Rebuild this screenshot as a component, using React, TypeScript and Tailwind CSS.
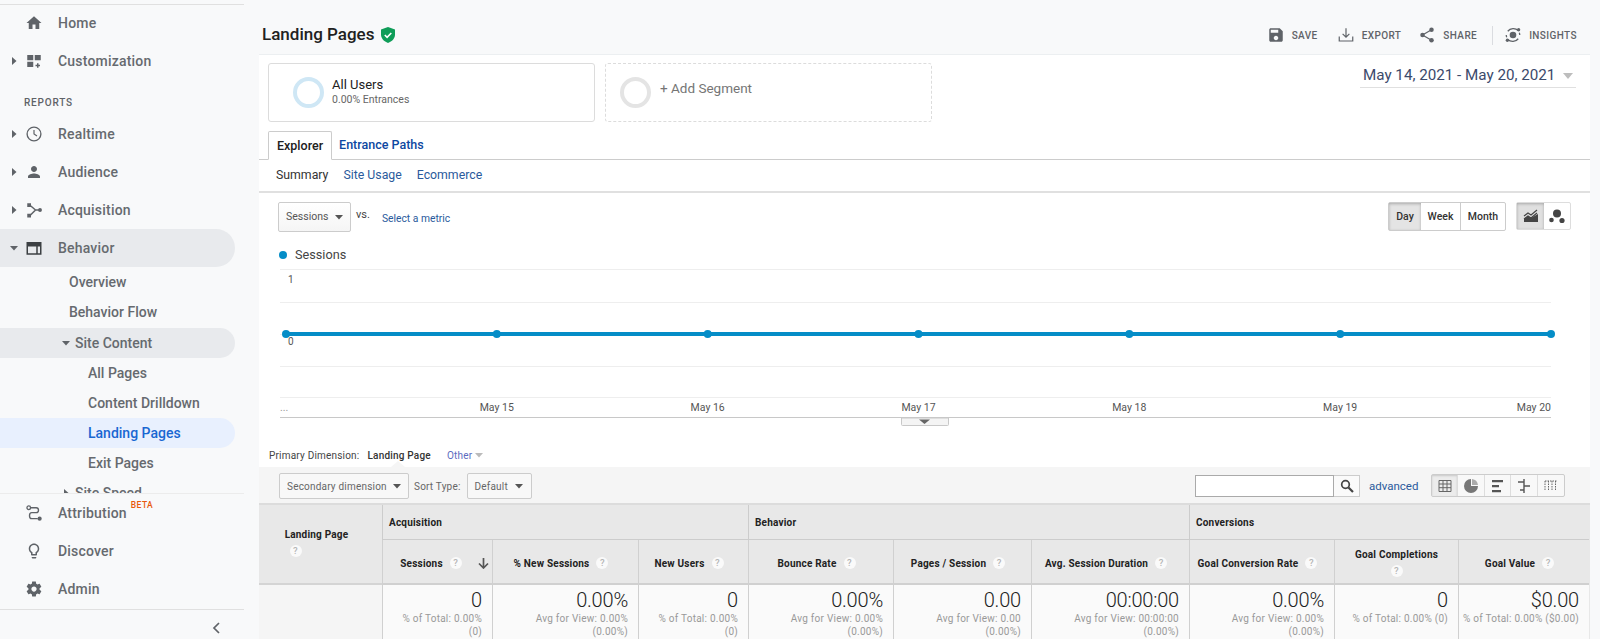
import type { ReactNode } from "react";

const G = "#5f6368";

function Caret({ open }: { open?: boolean }) {
  return (
    <svg width="8" height="8" viewBox="0 0 8 8" className="shrink-0">
      {open ? <path d="M0 2h8L4 6.5z" fill={G} /> : <path d="M2 0v8l4.5-4z" fill={G} />}
    </svg>
  );
}

const navIcons: Record<string, ReactNode> = {
  Home: <path d="M10 20v-6h4v6h5v-8h3L12 3 2 12h3v8z" fill={G} />,
  Customization: (
    <path d="M3 4h8v7H3zM13 4h8v7h-8zM3 13h8v7H3zM16 15h2v2h2v2h-2v2h-2v-2h-2v-2h2z" fill={G} />
  ),
  Realtime: (
    <>
      <circle cx="12" cy="12" r="9.2" fill="none" stroke={G} strokeWidth="1.8" />
      <path d="M12 6.5V12l4 2.6" fill="none" stroke={G} strokeWidth="1.6" />
    </>
  ),
  Audience: (
    <path
      d="M12 12c2.21 0 4-1.79 4-4s-1.79-4-4-4-4 1.79-4 4 1.79 4 4 4zm0 2c-2.67 0-8 1.34-8 4v2h16v-2c0-2.66-5.33-4-8-4z"
      fill={G}
    />
  ),
  Acquisition: (
    <>
      <path d="M3 3h5v5H3zM3 17h5v5H3z" fill={G} />
      <circle cx="20" cy="12" r="2.6" fill={G} />
      <path d="M7 6l7 6-7 7M13 12h6" fill="none" stroke={G} strokeWidth="2" />
    </>
  ),
  Behavior: <path d="M2 4h20v17H2zM4 10v9h11v-9zm13 0v9h3v-9z" fill="#3c4043" fillRule="evenodd" />,
  Attribution: (
    <>
      <circle cx="5" cy="5" r="2.4" fill="none" stroke={G} strokeWidth="1.7" />
      <circle cx="19.5" cy="19.5" r="2.8" fill={G} />
      <path d="M8 5h7c4 0 4 6.5 0 6.5H9c-4 0-4 8 0 8h8" fill="none" stroke={G} strokeWidth="1.8" />
    </>
  ),
  Discover: (
    <path
      d="M9 21c0 .55.45 1 1 1h4c.55 0 1-.45 1-1v-1H9v1zm3-19C8.14 2 5 5.14 5 9c0 2.38 1.19 4.47 3 5.74V17c0 .55.45 1 1 1h6c.55 0 1-.45 1-1v-2.26c1.81-1.27 3-3.36 3-5.74 0-3.86-3.14-7-7-7zm2.85 11.1l-.85.6V16h-4v-2.3l-.85-.6C7.8 12.16 7 10.63 7 9c0-2.76 2.24-5 5-5s5 2.24 5 5c0 1.63-.8 3.16-2.15 4.1z"
      fill={G}
    />
  ),
  Admin: (
    <path
      d="M19.43 12.98c.04-.32.07-.64.07-.98s-.03-.66-.07-.98l2.11-1.65c.19-.15.24-.42.12-.64l-2-3.46c-.12-.22-.39-.3-.61-.22l-2.49 1c-.52-.4-1.08-.73-1.69-.98l-.38-2.65C14.46 2.18 14.25 2 14 2h-4c-.25 0-.46.18-.49.42l-.38 2.65c-.61.25-1.17.59-1.69.98l-2.49-1c-.23-.09-.49 0-.61.22l-2 3.46c-.13.22-.07.49.12.64l2.11 1.65c-.04.32-.07.65-.07.98s.03.66.07.98l-2.11 1.65c-.19.15-.24.42-.12.64l2 3.46c.12.22.39.3.61.22l2.49-1c.52.4 1.08.73 1.69.98l.38 2.65c.03.24.24.42.49.42h4c.25 0 .46-.18.49-.42l.38-2.65c.61-.25 1.17-.59 1.69-.98l2.49 1c.23.09.49 0 .61-.22l2-3.46c.12-.22.07-.49-.12-.64l-2.11-1.65zM12 15.5c-1.93 0-3.5-1.57-3.5-3.5s1.57-3.5 3.5-3.5 3.5 1.57 3.5 3.5-1.57 3.5-3.5 3.5z"
      fill={G}
    />
  ),
};

function NavRow({ label, caret, open, active, beta }: { label: string; caret?: boolean; open?: boolean; active?: boolean; beta?: boolean }) {
  return (
    <div className={`flex h-[38px] w-[235px] items-center rounded-r-[19px] ${active ? "bg-[#e8eaed]" : ""}`}>
      <div className="flex w-[24px] justify-end pr-[6px]">{caret && <Caret open={open} />}</div>
      <svg width="18" height="18" viewBox="0 0 24 24" className="ml-[1px] shrink-0">
        {navIcons[label]}
      </svg>
      <span className="ml-[15px] text-[14px] font-medium tracking-[0.2px] text-[#666a6f]">{label}</span>
      {beta && <sup className="ml-[4px] -mt-[7px] text-[8.5px] font-medium tracking-[0.4px] text-[#e8590c]">BETA</sup>}
    </div>
  );
}

function SubRow({ label, pl, active, pill }: { label: string; pl: string; active?: boolean; pill?: boolean }) {
  return (
    <div
      className={`flex h-[30px] w-[235px] shrink-0 items-center rounded-r-[15px] text-[14px] font-medium ${pl} ${
        active ? "bg-[#e8f0fe] text-[#1967d2]" : pill ? "bg-[#e8eaed] text-[#666a6f]" : "text-[#666a6f]"
      }`}
    >
      {pill && (
        <span className="mr-[5px]">
          <Caret open />
        </span>
      )}
      {label}
    </div>
  );
}

function Sidebar() {
  return (
    <aside className="flex h-full w-[244px] shrink-0 flex-col border-t border-[#e0e0e0] bg-[#f8f9fa]">
      <div className="-mt-[1px] min-h-0 flex-1 overflow-hidden">
        <NavRow label="Home" />
        <NavRow label="Customization" caret />
        <div className="flex h-[35px] items-center pl-[24px] pt-[9px] text-[10px] font-medium tracking-[0.8px] text-[#5f6368]">REPORTS</div>
        <NavRow label="Realtime" caret />
        <NavRow label="Audience" caret />
        <NavRow label="Acquisition" caret />
        <NavRow label="Behavior" caret open active />
        <SubRow label="Overview" pl="pl-[69px]" />
        <SubRow label="Behavior Flow" pl="pl-[69px]" />
        <div className="h-[1px]" />
        <SubRow label="Site Content" pl="pl-[62px]" pill />
        <SubRow label="All Pages" pl="pl-[88px]" />
        <SubRow label="Content Drilldown" pl="pl-[88px]" />
        <SubRow label="Landing Pages" pl="pl-[88px]" active />
        <SubRow label="Exit Pages" pl="pl-[88px]" />
        <div className="flex h-[30px] items-center pl-[62px] text-[14px] font-medium text-[#666a6f]">
          <span className="mr-[5px]">
            <Caret />
          </span>
          Site Speed
        </div>
      </div>
      <div className="border-t border-[#ececec] bg-[#f8f9fa]">
        <NavRow label="Attribution" beta />
        <NavRow label="Discover" />
        <NavRow label="Admin" />
        <div className="mt-[1px] flex h-[30px] items-center justify-end border-t border-[#e0e0e0] pr-[22px] pt-[7px]">
          <svg width="12" height="14" viewBox="0 0 12 14">
            <path d="M9 2L4 7l5 5" fill="none" stroke={G} strokeWidth="1.7" />
          </svg>
        </div>
      </div>
    </aside>
  );
}

function HeaderAction({ label, icon }: { label: string; icon: ReactNode }) {
  return (
    <div className="flex items-center gap-[7px]">
      <svg width="18" height="18" viewBox="0 0 24 24">
        {icon}
      </svg>
      <span className="text-[10px] font-medium tracking-[0.4px] text-[#5f6368]">{label}</span>
    </div>
  );
}

function Header() {
  return (
    <div className="flex h-[50px] items-center justify-between pl-[3px] pr-[13px] pt-[12px]">
      <div className="flex items-center gap-[7px]">
        <h1 className="text-[17px] font-medium text-[#212121]">Landing Pages</h1>
        <svg width="14" height="16" viewBox="0 0 14 16">
          <path d="M7 0l7 2.6v5c0 3.9-3 7-7 8.4-4-1.4-7-4.5-7-8.4v-5z" fill="#0f9d58" />
          <path d="M3.8 8l2.3 2.3 4.2-4.3" fill="none" stroke="#fff" strokeWidth="1.6" />
        </svg>
      </div>
      <div className="flex items-center">
        <HeaderAction
          label="SAVE"
          icon={<path d="M17 3H5c-1.11 0-2 .9-2 2v14c0 1.1.89 2 2 2h14c1.1 0 2-.9 2-2V7l-4-4zm-5 16c-1.66 0-3-1.34-3-3s1.34-3 3-3 3 1.34 3 3-1.34 3-3 3zm3-10H5V5h10v4z" fill={G} />}
        />
        <div className="w-[19px]" />
        <HeaderAction
          label="EXPORT"
          icon={<path d="M12 3v12M7.5 10.5L12 15l4.5-4.5M3 14v6h18v-6" fill="none" stroke={G} strokeWidth="1.6" />}
        />
        <div className="w-[17px]" />
        <HeaderAction
          label="SHARE"
          icon={
            <>
              <path d="M18 5L6 12l12 7" fill="none" stroke={G} strokeWidth="1.6" />
              <circle cx="18" cy="5" r="3" fill={G} />
              <circle cx="6" cy="12" r="3" fill={G} />
              <circle cx="18" cy="19" r="3" fill={G} />
            </>
          }
        />
        <div className="ml-[15px] mr-[11px] h-[19px] w-px bg-[#dadce0]" />
        <HeaderAction
          label="INSIGHTS"
          icon={
            <>
              <path d="M5 7a9.5 9.5 0 0 1 14-1M19 17a9.5 9.5 0 0 1-14 1" fill="none" stroke={G} strokeWidth="1.7" />
              <path d="M3 12a9 9 0 0 0 .6 3M21 12a9 9 0 0 0-.6-3" fill="none" stroke={G} strokeWidth="1.7" />
              <circle cx="12" cy="12" r="4.4" fill={G} />
              <circle cx="19.5" cy="5" r="2.2" fill={G} />
              <circle cx="4.5" cy="19" r="2.2" fill={G} />
            </>
          }
        />
      </div>
    </div>
  );
}

function Segments() {
  return (
    <div className="flex pl-[9px] pr-[14px] pt-[8px]">
      <div className="flex h-[59px] w-[327px] items-center rounded-[3px] border border-[#dcdcdc] pl-[24px]">
        <div className="h-[31px] w-[31px] rounded-full border-[4px] border-[#cfe7f5]" />
        <div className="ml-[8px] -mt-[2px]">
          <div className="text-[13px] leading-[16px] text-[#212121]">All Users</div>
          <div className="text-[10.5px] leading-[13px] text-[#666]">0.00% Entrances</div>
        </div>
      </div>
      <div className="ml-[10px] flex h-[59px] w-[327px] items-center rounded-[3px] border border-dashed border-[#dcdcdc] pl-[14px]">
        <div className="h-[31px] w-[31px] rounded-full border-[4px] border-[#e4e4e4]" />
        <div className="ml-[9px] -mt-[8px] text-[13.5px] text-[#757575]">+ Add Segment</div>
      </div>
      <div className="ml-auto flex h-[25px] w-[216px] items-start justify-between border-b border-[#e0e0e0] pl-[3px] pr-[1px]">
        <span className="text-[15.2px] leading-[25px] text-[#3c4a6b]">May 14, 2021 - May 20, 2021</span>
        <svg width="14" height="8" viewBox="0 0 14 8" className="mt-[10px]">
          <path d="M2 0h10L7 6z" fill="#bdbdbd" />
        </svg>
      </div>
    </div>
  );
}

function Tabs() {
  return (
    <>
      <div className="mt-[9px] flex h-[29px] border-b border-[#ccc] pl-[9px]">
        <div className="h-[29px] rounded-t-[2px] border border-b-white border-[#ccc] bg-white px-[8px] text-[12.5px] font-medium leading-[27px] text-[#212121]">
          Explorer
        </div>
        <div className="pl-[7px] text-[12.5px] font-medium leading-[28px] text-[#0d47a1]">Entrance Paths</div>
      </div>
      <div className="flex h-[33px] items-center gap-[15px] border-b-2 border-[#e0e0e0] pl-[17px] text-[12.3px]">
        <span className="text-[#333]">Summary</span>
        <span className="text-[#2a5a9c]">Site Usage</span>
        <span className="text-[#2a5a9c]">Ecommerce</span>
      </div>
    </>
  );
}

function DropCaret() {
  return (
    <svg width="8" height="5" viewBox="0 0 8 5">
      <path d="M0 0h8L4 4.5z" fill="#555" />
    </svg>
  );
}

function ChartControls() {
  return (
    <div className="flex items-start pl-[19px] pr-[19px] pt-[9px]">
      <div className="flex h-[30px] w-[73px] items-center justify-between rounded-[2px] border border-[#ccc] bg-gradient-to-b from-white to-[#f5f5f5] pl-[7px] pr-[7px] text-[10.5px] text-[#555]">
        Sessions
        <DropCaret />
      </div>
      <span className="ml-[5px] mt-[5px] text-[11px] text-[#444]">vs.</span>
      <span className="ml-[12px] mt-[9px] text-[10.3px] text-[#2a5a9c]">Select a metric</span>
      <div className="ml-auto flex h-[29px] items-center rounded-[2px] border border-[#ccc] text-[10.5px] font-medium text-[#333]">
        <span className="flex h-full w-[32px] items-center justify-center bg-[#e4e4e4] shadow-[inset_0_1px_3px_rgba(0,0,0,0.25)]">Day</span>
        <span className="flex h-full w-[40px] items-center justify-center border-r border-[#ccc]">Week</span>
        <span className="flex h-full w-[44px] items-center justify-center">Month</span>
      </div>
      <div className="ml-[10px] flex h-[28px] rounded-[2px] border border-[#ddd]">
        <span className="flex h-full w-[27px] items-center justify-center bg-[#e0e0e0] shadow-[inset_0_1px_3px_rgba(0,0,0,0.25)]">
          <svg width="16" height="14" viewBox="0 0 16 14">
            <path d="M1 7l4-3 3 2 6-5M1 10l4-3 3 2 6-5" fill="none" stroke="#444" strokeWidth="1.2" />
            <path d="M1 10l4-3 3 2 7-4v8H1z" fill="#444" />
          </svg>
        </span>
        <span className="flex h-full w-[26px] items-center justify-center">
          <svg width="16" height="15" viewBox="0 0 16 15">
            <circle cx="8" cy="4.5" r="4" fill="#444" />
            <circle cx="2.5" cy="11" r="2.3" fill="#444" />
            <circle cx="13" cy="11.5" r="2.6" fill="#444" />
          </svg>
        </span>
      </div>
    </div>
  );
}

const chartLabels = ["May 15", "May 16", "May 17", "May 18", "May 19"];

function Chart() {
  // coordinates inside the svg: x is page x - 259, y is page y - 262
  const xs = [27, 237.8, 448.7, 659.5, 870.3, 1081.2, 1292];
  return (
    <svg width="1331" height="166" viewBox="0 0 1331 166" className="block">
      {[7, 40, 72, 104, 135].map((y) => (
        <line key={y} x1="21" x2="1292" y1={y + 0.5} y2={y + 0.5} stroke="#eeeeee" />
      ))}
      <line x1="21" x2="1292" y1="155.5" y2="155.5" stroke="#c8c8c8" />
      <text x="29" y="21" fontSize="10" fill="#555">1</text>
      <text x="29" y="83" fontSize="10" fill="#555">0</text>
      <line x1={xs[0]} x2={xs[6]} y1="72" y2="72" stroke="#058dc7" strokeWidth="4" />
      {xs.map((x) => (
        <circle key={x} cx={x} cy="72" r="4" fill="#058dc7" />
      ))}
      <text x="21" y="149" fontSize="10.5" fill="#999">...</text>
      {chartLabels.map((l, i) => (
        <text key={l} x={xs[i + 1]} y="149" fontSize="10.5" textAnchor="middle" fill="#555">
          {l}
        </text>
      ))}
      <text x="1292" y="149" fontSize="10.5" textAnchor="end" fill="#555">May 20</text>
      <path d="M642.5 156v6.5a1 1 0 0 0 1 1h45a1 1 0 0 0 1-1V156z" fill="#f4f4f4" stroke="#c8c8c8" />
      <path d="M660 157.5h11l-5.5 4.5z" fill="#666" />
    </svg>
  );
}

function PrimaryDimension() {
  return (
    <div className="relative mt-[16px] flex h-[23px] items-center pl-[10px] text-[10px] tracking-[0.2px]">
      <span className="text-[#444]">Primary Dimension:</span>
      <span className="ml-[8px] font-medium text-[#333]">Landing Page</span>
      <span className="ml-[16px] text-[#5c6bc0]">Other</span>
      <svg width="8" height="5" viewBox="0 0 8 5" className="ml-[3px]">
        <path d="M0 0h8L4 4.5z" fill="#bbb" />
      </svg>
      <svg width="14" height="6" viewBox="0 0 14 6" className="absolute bottom-0 left-[132px]">
        <path d="M0 6l7-6 7 6z" fill="#f5f5f5" />
      </svg>
    </div>
  );
}

function ViewIcon({ children, active }: { children: ReactNode; active?: boolean }) {
  return (
    <span className={`flex h-full w-[26.6px] items-center justify-center border-r border-[#ddd] last:border-r-0 ${active ? "bg-[#ececec] shadow-[inset_0_1px_2px_rgba(0,0,0,0.15)]" : ""}`}>
      <svg width="14" height="14" viewBox="0 0 14 14">
        {children}
      </svg>
    </span>
  );
}

function Toolbar() {
  return (
    <div className="flex h-[36px] items-start bg-[#f5f5f5] pl-[20px] pr-[25px] pt-[6px] text-[10px] text-[#666]">
      <div className="flex h-[26px] w-[130px] items-center justify-between rounded-[2px] border border-[#ccc] bg-[#f8f8f8] pl-[7px] pr-[7px] tracking-[0.2px]">
        Secondary dimension
        <DropCaret />
      </div>
      <span className="ml-[5px] mt-[6px] tracking-[0.2px]">Sort Type:</span>
      <div className="ml-[6px] flex h-[26px] w-[65px] items-center justify-between rounded-[2px] border border-[#ccc] bg-[#f8f8f8] pl-[7px] pr-[8px] tracking-[0.2px]">
        Default
        <DropCaret />
      </div>
      <div className="ml-auto mt-[2px] flex h-[22px] w-[165px]">
        <div className="w-[140px] border border-[#aaa] bg-white" />
        <div className="flex w-[26px] items-center justify-center border border-l-0 border-[#ccc] bg-[#fafafa]">
          <svg width="14" height="14" viewBox="0 0 14 14">
            <circle cx="5.5" cy="5.5" r="3.8" fill="none" stroke="#444" strokeWidth="1.7" />
            <path d="M8.5 8.5L13 13" stroke="#444" strokeWidth="2.2" />
          </svg>
        </div>
      </div>
      <span className="ml-[9px] mt-[5px] w-[62px] text-[11.5px] text-[#2a5a9c]">advanced</span>
      <div className="mt-[1px] flex h-[23px] w-[134px] rounded-[2px] border border-[#ccc] bg-[#f8f8f8]">
        <ViewIcon active>
          <path d="M1 1.5h12v11H1zM1 5h12M1 8.7h12M5 1.5v11M9 1.5v11" fill="none" stroke="#666" />
        </ViewIcon>
        <ViewIcon>
          <path d="M7 0a7 7 0 1 0 7 7H7z" fill="#777" />
          <path d="M8 0v6h6a7 7 0 0 0-6-6z" fill="#aaa" />
        </ViewIcon>
        <ViewIcon>
          <path d="M1 1h11v2.2H1zM1 6h7v2.2H1zM1 11h9v2.2H1z" fill="#555" />
        </ViewIcon>
        <ViewIcon>
          <path d="M7 0v14M1 3h6M7 7h6M3 11h4" fill="none" stroke="#555" strokeWidth="1.4" />
        </ViewIcon>
        <ViewIcon>
          <path d="M1 2h12M1 2v10M4.5 2v10M8 2v10M11.5 2v10" fill="none" stroke="#666" strokeDasharray="1.5 1" />
        </ViewIcon>
      </div>
    </div>
  );
}

function Help({ className = "" }: { className?: string }) {
  return (
    <span className={`inline-flex h-[12px] w-[12px] shrink-0 items-center justify-center rounded-full bg-[#fafafa] text-[9.5px] font-medium leading-none text-[#b5b5b5] ${className}`}>
      ?
    </span>
  );
}

const columns = [
  { name: "Sessions", value: "0", sub: ["% of Total: 0.00%", "(0)"] },
  { name: "% New Sessions", value: "0.00%", sub: ["Avg for View: 0.00%", "(0.00%)"] },
  { name: "New Users", value: "0", sub: ["% of Total: 0.00%", "(0)"] },
  { name: "Bounce Rate", value: "0.00%", sub: ["Avg for View: 0.00%", "(0.00%)"] },
  { name: "Pages / Session", value: "0.00", sub: ["Avg for View: 0.00", "(0.00%)"] },
  { name: "Avg. Session Duration", value: "00:00:00", sub: ["Avg for View: 00:00:00", "(0.00%)"] },
  { name: "Goal Conversion Rate", value: "0.00%", sub: ["Avg for View: 0.00%", "(0.00%)"] },
  { name: "Goal Completions", value: "0", sub: ["% of Total: 0.00% (0)"] },
  { name: "Goal Value", value: "$0.00", sub: ["% of Total: 0.00% ($0.00)"] },
];

function Table() {
  const head = "text-[10px] font-bold tracking-[0.2px] text-[#222]";
  return (
    <div className={`grid grid-cols-[123px_110px_146px_110px_145px_138px_158px_145px_124px_131px] grid-rows-[35px_45px_56px] border-t-2 border-[#dcdcdc] bg-[#e8e8e8] ${head}`}>
      <div className="row-span-2 flex flex-col items-center border-b-2 border-[#d4d4d4] pt-[22px]">
        <span className="pr-[8px]">Landing Page</span>
        <Help className="mr-[50px] mt-[3px]" />
      </div>
      {["Acquisition", "Behavior", "Conversions"].map((g) => (
        <div key={g} className="col-span-3 flex items-center border-b border-l border-[#ccc] pl-[6px]">
          {g}
        </div>
      ))}
      {columns.map((c) =>
        c.name === "Goal Completions" ? (
          <div key={c.name} className="flex flex-col items-center justify-center gap-[3px] border-b-2 border-l border-[#d0d0d0]">
            {c.name}
            <Help />
          </div>
        ) : (
          <div key={c.name} className={`relative flex items-center justify-center gap-[7px] border-b-2 border-l border-[#d0d0d0] pt-[3px] ${c.name === "Sessions" ? "pr-[13px]" : "pr-[9px]"}`}>
            {c.name}
            <Help />
            {c.name === "Sessions" && (
              <svg width="11" height="11" viewBox="0 0 11 11" className="absolute right-[3px] top-[18px]">
                <path d="M5.5 0v9M1 5.5l4.5 4.5L10 5.5" fill="none" stroke="#555" strokeWidth="1.7" />
              </svg>
            )}
          </div>
        ),
      )}
      <div className="bg-[#f5f5f5]" />
      {columns.map((c) => (
        <div key={c.name} className="border-l border-[#d0d0d0] bg-[#fafafa] pr-[10px] pt-[3px] text-right font-normal">
          <div className="text-[20px] leading-[24px] font-light tracking-[-0.2px] text-[#212121]">{c.value}</div>
          {c.sub.map((s) => (
            <div key={s} className="whitespace-nowrap text-[10px] leading-[13px] tracking-[0.25px] text-[#999]">
              {s}
            </div>
          ))}
        </div>
      ))}
    </div>
  );
}

export default function App() {
  return (
    <div className="flex h-[639px] w-[1600px] overflow-hidden bg-[#f8f9fa] pt-[4px] font-[Roboto,sans-serif]">
      <Sidebar />
      <main className="ml-[15px] w-[1331px]">
        <Header />
        <div className="border-t border-[#eceff1] bg-white">
          <Segments />
          <Tabs />
          <ChartControls />
          <div className="flex h-[30px] items-center pl-[20px] pt-[16px] text-[12.7px] text-[#444]">
            <span className="mr-[8px] h-[8px] w-[8px] rounded-full bg-[#058dc7]" />
            Sessions
          </div>
          <Chart />
          <PrimaryDimension />
          <Toolbar />
          <Table />
        </div>
      </main>
    </div>
  );
}
